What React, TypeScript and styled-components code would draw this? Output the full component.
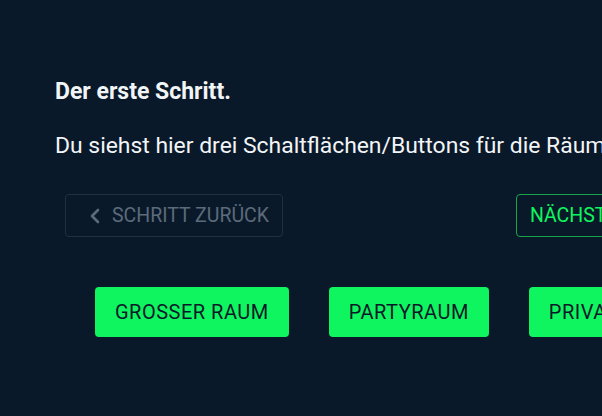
import React, { FC } from "react";
import styled, { createGlobalStyle } from "styled-components";

const colors = {
  bg: "#0a1929",
  text: "#f2f5f8",
  muted: "#5b6b7c",
  mutedBorder: "#1f3043",
  green: "#0ff55f",
  greenBorder: "#17a54c",
  greenDark: "#0a1929",
};

const GlobalStyle = createGlobalStyle`
  html, body {
    margin: 0;
    padding: 0;
    background: ${colors.bg};
    overflow: hidden;
  }
  body {
    font-family: Roboto, "Noto Sans", sans-serif;
    color: ${colors.text};
  }
`;

const Chevron: FC<{ dir: "left" | "right" }> = ({ dir }) => (
  <svg width="12" height="16" viewBox="0 0 12 16" fill="none">
    <path
      d={dir === "left" ? "M9 2 L3 8 L9 14" : "M3 2 L9 8 L3 14"}
      stroke="currentColor"
      strokeWidth="2.6"
      strokeLinecap="round"
      strokeLinejoin="round"
    />
  </svg>
);

const rooms = ["GROSSER RAUM", "PARTYRAUM", "PRIVATRAUM"];

const App: FC = () => {
  return (
    <Page>
      <GlobalStyle />
      <Intro>
        <Title>Der erste Schritt.</Title>
        <Text>
          Du siehst hier drei Schaltflächen/Buttons für die Räume, die du
          buchen kannst.
        </Text>
      </Intro>
      <StepNav>
        <StepButton disabled>
          <Chevron dir="left" />
          Schritt zurück
        </StepButton>
        <StepButton $active>
          Nächster Schritt
          <Chevron dir="right" />
        </StepButton>
      </StepNav>
      <RoomRow>
        {rooms.map((room) => (
          <RoomButton key={room}>{room}</RoomButton>
        ))}
      </RoomRow>
    </Page>
  );
};

const Page = styled.div`
  width: 900px;
  height: 416px;
  padding: 77px 0 0 55px;
  box-sizing: border-box;
`;

const Intro = styled.div`
  display: flex;
  flex-direction: column;
  gap: 25px;
`;

const Title = styled.h2`
  margin: 0;
  font-size: 23px;
  font-weight: 700;
  line-height: 30px;
  white-space: nowrap;
`;

const Text = styled.p`
  margin: 0;
  font-size: 22.9px;
  font-weight: 400;
  line-height: 28px;
  white-space: nowrap;
`;

const StepNav = styled.div`
  display: flex;
  justify-content: space-between;
  width: 685px;
  margin: 34px 0 0 10px;
`;

const StepButton = styled.button<{ $active?: boolean }>`
  display: flex;
  align-items: center;
  gap: 11px;
  height: 43px;
  padding: 0 13px 0 ${({ $active }) => ($active ? "13px" : "23px")};
  box-sizing: border-box;
  border-radius: 4px;
  border: 1px solid
    ${({ $active }) => ($active ? colors.greenBorder : colors.mutedBorder)};
  background: transparent;
  color: ${({ $active }) => ($active ? colors.green : colors.muted)};
  font-family: Roboto, sans-serif;
  font-size: 19.5px;
  font-weight: 400;
  text-transform: uppercase;
  cursor: pointer;

  &:disabled {
    cursor: default;
  }
`;

const RoomRow = styled.div`
  display: flex;
  gap: 40px;
  margin: 50px 0 0 40px;
`;

const RoomButton = styled.button`
  height: 50px;
  padding: 0 20px;
  border: none;
  border-radius: 4px;
  background: ${colors.green};
  color: ${colors.greenDark};
  font-family: Roboto, sans-serif;
  font-size: 20px;
  font-weight: 400;
  letter-spacing: 0.5px;
  white-space: nowrap;
  cursor: pointer;
`;

export default App;
